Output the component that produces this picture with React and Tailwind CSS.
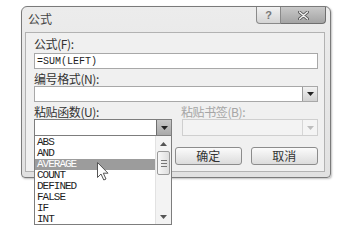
/* eslint-disable */

const cjk = { fontFamily: '"Noto Sans CJK SC", "Liberation Sans", sans-serif' };
const mono = { fontFamily: '"Liberation Mono", "DejaVu Sans Mono", monospace' };

const functions = ['ABS', 'AND', 'AVERAGE', 'COUNT', 'DEFINED', 'FALSE', 'IF', 'INT'];

function DownTri({ color = '#333' }) {
  return (
    <svg width="7" height="4" viewBox="0 0 7 4">
      <path d="M0 0 L7 0 L3.5 4 Z" fill={color} />
    </svg>
  );
}

function DropButton({ dark, disabled }) {
  return (
    <div
      className={`flex h-full w-[15px] items-center justify-center border-l ${
        disabled
          ? 'border-[#d6d6d6] bg-[#f4f4f4]'
          : dark
          ? 'border-[#6e6e6e] bg-gradient-to-b from-[#c8c8c8] to-[#a9a9a9]'
          : 'border-[#9a9a9a] bg-gradient-to-b from-[#f2f2f2] to-[#d2d2d2]'
      }`}
    >
      <DownTri color={disabled ? '#bdbdbd' : '#222'} />
    </div>
  );
}

function Label({ children, disabled }) {
  return (
    <div
      className={`h-[14px] text-[12px] leading-[14px] tracking-[-0.4px] ${disabled ? 'text-[#a5a5a5]' : 'text-[#333]'}`}
      style={cjk}
    >
      {children}
    </div>
  );
}

function Cursor() {
  return (
    <svg width="12" height="19" viewBox="0 0 12 19" className="absolute left-[62px] top-[26px]">
      <path
        d="M0.5 0.5 L0.5 15.5 L4 12 L6.8 18 L9 17 L6.3 11.2 L11 11.2 Z"
        fill="#ffffff"
        stroke="#555"
        strokeWidth="1"
        strokeLinejoin="round"
      />
    </svg>
  );
}

function FunctionList() {
  return (
    <div className="absolute left-0 top-[17px] flex h-[89px] w-[138px] border border-t-0 border-[#7d7d7d] bg-white">
      <div className="relative flex-1 pt-px">
        {functions.map((name) => (
          <div
            key={name}
            className={`h-[11px] pl-[2px] text-[11px] leading-[11px] tracking-[-1px] ${
              name === 'AVERAGE' ? 'bg-[#9c9c9c] text-white' : 'text-[#1e1e1e]'
            }`}
            style={mono}
          >
            {name}
          </div>
        ))}
        <Cursor />
      </div>
      <div className="flex w-[16px] flex-col border-l border-[#e2e2e2] bg-[#f3f3f3]">
        <div className="flex h-[15px] items-center justify-center">
          <svg width="7" height="4" viewBox="0 0 7 4">
            <path d="M0 4 L7 4 L3.5 0 Z" fill="#555" />
          </svg>
        </div>
        <div className="mx-[1px] flex h-[24px] flex-col items-center justify-center gap-[2px] rounded-[2px] border border-[#9a9a9a] bg-gradient-to-r from-[#f8f8f8] to-[#dedede]">
          <div className="h-px w-[6px] bg-[#777]" />
          <div className="h-px w-[6px] bg-[#777]" />
          <div className="h-px w-[6px] bg-[#777]" />
        </div>
        <div className="flex-1" />
        <div className="flex h-[15px] items-center justify-center">
          <DownTri color="#555" />
        </div>
      </div>
    </div>
  );
}

function DialogButton({ children }) {
  return (
    <div
      className="flex h-[18px] items-center justify-center rounded-[3px] border border-[#8c8c8c] bg-gradient-to-b from-[#fbfbfb] to-[#dcdcdc] text-[12px] text-[#333]"
      style={cjk}
    >
      {children}
    </div>
  );
}

export default function App() {
  return (
    <div className="h-[242px] w-[353px] bg-white pl-[21px] pt-[6px]">
      <div className="flex h-[172px] w-[310px] flex-col rounded-t-[6px] rounded-b-[4px] border border-[#7a7a7a] bg-gradient-to-b from-[#ececec] to-[#e1e1e1] shadow-[1px_1px_2px_rgba(0,0,0,0.25)]">
        <div className="flex h-[25px] items-start justify-between">
          <div className="pl-[6px] pt-[5px] text-[12px] leading-[14px] text-[#444]" style={cjk}>
            公式
          </div>
          <div className="mr-[4px] flex h-[17px]">
            <div className="flex w-[25px] items-center justify-center rounded-bl-[4px] border border-t-0 border-[#8a8a8a] bg-gradient-to-b from-[#f2f2f2] to-[#d4d4d4] text-[11px] font-bold text-[#777]" style={{ fontFamily: '"Liberation Sans", sans-serif' }}>
              ?
            </div>
            <div className="flex w-[45px] items-center justify-center rounded-br-[4px] border border-l-0 border-t-0 border-[#6f6f6f] bg-gradient-to-b from-[#c9c9c9] to-[#a4a4a4]">
              <svg width="11" height="9" viewBox="0 0 11 9">
                <path d="M1.5 1 L9.5 8 M9.5 1 L1.5 8" stroke="#555" strokeWidth="3" strokeLinecap="round" />
                <path d="M1.5 1 L9.5 8 M9.5 1 L1.5 8" stroke="#f4f4f4" strokeWidth="1.4" strokeLinecap="round" />
              </svg>
            </div>
          </div>
        </div>
        <div className="mb-[5px] ml-[3px] mr-[5px] flex flex-1 flex-col border border-[#b2b2b2] bg-[#f0f0f0] pl-[8px] pr-[6px] pt-[4px]">
          <Label>公式(F):</Label>
          <div className="mt-[2px] flex h-[16px] items-center border border-[#a8a8a8] bg-white pl-[2px] text-[10px] text-[#1e1e1e]" style={mono}>
            =SUM(LEFT)
          </div>
          <div className="mt-[3px]">
            <Label>编号格式(N):</Label>
          </div>
          <div className="flex h-[16px] justify-end border border-[#a8a8a8] bg-white">
            <DropButton />
          </div>
          <div className="mt-[3px] flex">
            <div className="w-[147px]">
              <Label>粘贴函数(U):</Label>
            </div>
            <Label disabled>粘贴书签(B):</Label>
          </div>
          <div className="flex h-[17px] gap-[10px]">
            <div className="relative w-[138px]">
              <div className="flex h-[17px] justify-end border border-[#7d7d7d] bg-white">
                <DropButton dark />
              </div>
              <FunctionList />
            </div>
            <div className="flex flex-1 justify-end border border-[#cfcfcf] bg-[#f3f3f3]">
              <DropButton disabled />
            </div>
          </div>
          <div className="mt-[11px] flex gap-[9px] pl-[141px]">
            <div className="w-[67px]">
              <DialogButton>确定</DialogButton>
            </div>
            <div className="w-[68px]">
              <DialogButton>取消</DialogButton>
            </div>
          </div>
        </div>
      </div>
    </div>
  );
}
